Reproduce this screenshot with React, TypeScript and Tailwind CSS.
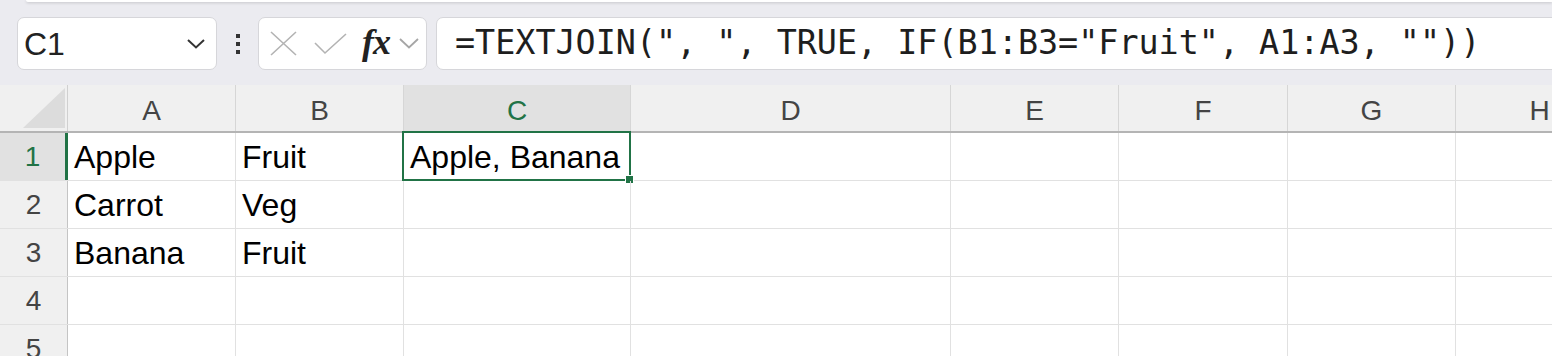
const cols = [
  { name: "A", w: "w-[168px]" },
  { name: "B", w: "w-[168px]" },
  { name: "C", w: "w-[227px]" },
  { name: "D", w: "w-[320px]" },
  { name: "E", w: "w-[168px]" },
  { name: "F", w: "w-[169px]" },
  { name: "G", w: "w-[168px]" },
  { name: "H", w: "w-[168px]" },
];

const data: string[][] = [
  ["Apple", "Fruit", "Apple, Banana"],
  ["Carrot", "Veg"],
  ["Banana", "Fruit"],
  [],
  [],
];

function Chevron({ w, color, sw }: { w: number; color: string; sw: number }) {
  const h = Math.round(w / 2) + 2;
  return (
    <svg width={w + 2} height={h} viewBox={`0 0 ${w + 2} ${h}`} className="shrink-0">
      <path d={`M1 1 L${w / 2 + 1} ${h - 1.5} L${w + 1} 1`} stroke={color} strokeWidth={sw} fill="none" />
    </svg>
  );
}

function FormulaBar() {
  return (
    <div className="h-[85px] bg-[#ebebf0] relative shrink-0 overflow-hidden">
      <div className="ml-[26px] h-[2px] bg-white rounded-bl-[6px] shadow-[0_1px_3px_rgba(0,0,0,0.18)]" />
      <div className="flex items-center pl-[17px] pt-[15px] whitespace-nowrap">
        <div className="w-[200px] h-[53px] shrink-0 bg-white border border-[#d6d6da] rounded-[7px] flex items-center justify-between pl-[6px] pr-[11px]">
          <span className="text-[32px] text-[#222] font-['Liberation_Sans',sans-serif]">C1</span>
          <Chevron w={16} color="#333" sw={2} />
        </div>
        <div className="w-[41px] shrink-0 flex flex-col items-center gap-[4px]">
          <div className="w-[4px] h-[4px] bg-[#333]" />
          <div className="w-[4px] h-[4px] bg-[#333]" />
          <div className="w-[4px] h-[4px] bg-[#333]" />
        </div>
        <div className="w-[169px] h-[53px] shrink-0 bg-white border border-[#d6d6da] rounded-[7px] flex items-center pl-[11px]">
          <svg width="27" height="25" viewBox="0 0 27 25" className="mr-[17px] shrink-0">
            <path d="M1 1 L26 24 M26 1 L1 24" stroke="#b3b3b3" strokeWidth="1.6" fill="none" />
          </svg>
          <svg width="33" height="22" viewBox="0 0 33 22" className="mr-[15px] shrink-0">
            <path d="M1 10 L11 20 L32 1" stroke="#b3b3b3" strokeWidth="1.6" fill="none" />
          </svg>
          <span className="text-[36px] italic font-semibold text-[#222] font-['Liberation_Serif',serif] leading-none mr-[9px] -mt-[4px] tracking-[-1px]">fx</span>
          <Chevron w={18} color="#a6a6a6" sw={1.8} />
        </div>
        <div className="ml-[9px] w-[1200px] h-[53px] shrink-0 bg-white border border-[#d6d6da] rounded-[7px] flex items-center pl-[18px]">
          <span className="text-[33.4px] text-[#1e1e1e] font-['DejaVu_Sans_Mono',monospace]">
            =TEXTJOIN(", ", TRUE, IF(B1:B3="Fruit", A1:A3, ""))
          </span>
        </div>
      </div>
    </div>
  );
}

function Grid() {
  return (
    <div className="font-['Liberation_Sans',sans-serif]">
      <div className="flex h-[48px] bg-[#f0f0f0] border-b-2 border-[#b4b4b4]">
        <div className="w-[68px] shrink-0 relative border-r border-[#d0d0d0]">
          <svg width="42" height="40" viewBox="0 0 42 40" className="absolute left-[23px] bottom-[3px]">
            <path d="M0 40 L42 40 L42 0 Z" fill="#dcdcdc" />
          </svg>
        </div>
        {cols.map((c) => (
          <div
            key={c.name}
            className={`${c.w} shrink-0 flex items-center justify-center pt-[6px] text-[28px] border-r border-[#d6d6d6] ${
              c.name === "C" ? "bg-[#e1e1e1] text-[#217346]" : "text-[#444]"
            }`}
          >
            {c.name}
          </div>
        ))}
      </div>
      {data.map((row, r) => (
        <div key={r} className="flex h-[48px] border-b border-[#e1e1e1]">
          <div
            className={`w-[68px] shrink-0 flex items-center justify-center text-[28px] ${
              r === 0
                ? "bg-[#e1e1e1] text-[#217346] border-r-[3px] border-[#217346]"
                : "bg-[#f0f0f0] text-[#444] border-r border-[#c4c4c4]"
            }`}
          >
            {r + 1}
          </div>
          {cols.map((c, ci) => (
            <div
              key={c.name}
              className={`${c.w} shrink-0 relative flex items-center pl-[6px] text-[32px] text-black whitespace-nowrap border-r border-[#e1e1e1]`}
            >
              {row[ci] ?? ""}
              {r === 0 && c.name === "C" && (
                <div className="absolute -left-[2px] -top-[2px] -right-[1px] -bottom-[1px] border-2 border-[#217346] pointer-events-none">
                  <div className="absolute -right-[5px] -bottom-[5px] w-[9px] h-[9px] bg-[#217346] border border-white" />
                </div>
              )}
            </div>
          ))}
        </div>
      ))}
    </div>
  );
}

export default function App() {
  return (
    <div className="w-[1552px] h-[356px] overflow-hidden bg-white flex flex-col">
      <FormulaBar />
      <Grid />
    </div>
  );
}
